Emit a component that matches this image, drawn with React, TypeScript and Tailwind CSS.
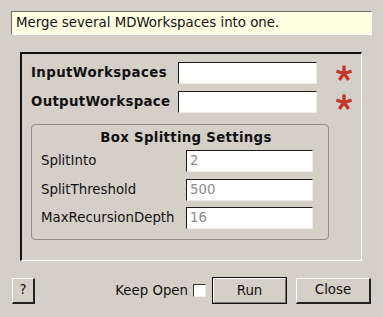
const font = { fontFamily: '"DejaVu Sans", sans-serif' }

const Star = () => (
    <svg width="16" height="16" viewBox="0 0 16 16" className="shrink-0">
        <g stroke="#c0392b" strokeWidth="3.4" strokeLinecap="butt">
            <line x1="8" y1="8.5" x2="8" y2="0.5" />
            <line x1="8" y1="8.5" x2="15.6" y2="6" />
            <line x1="8" y1="8.5" x2="12.7" y2="15" />
            <line x1="8" y1="8.5" x2="3.3" y2="15" />
            <line x1="8" y1="8.5" x2="0.4" y2="6" />
        </g>
    </svg>
)

const Field = ({ value, w }: { value?: string; w: string }) => (
    <div className={`${w} h-[22px] bg-white border border-t-[#1a1a1a] border-l-[#1a1a1a] border-r-[#ecebe8] border-b-[#ecebe8] flex items-center px-[3px] text-[13.33px] text-[#8c8c8c]`}>
        {value}
    </div>
)

const App = () => {
    return (
        <div style={font} className="w-[383px] h-[317px] bg-[#d4d0c8] text-[13.33px] text-[#111] flex flex-col overflow-hidden">
            <div className="mt-[11px] ml-[11px] w-[361px] h-[24px] bg-[#ffffe1] border border-t-[#6e6e6e] border-l-[#6e6e6e] border-r-white border-b-white flex items-center pl-[4px] leading-none">
                Merge several MDWorkspaces into one.
            </div>

            <div className="mt-[17px] ml-[20px] w-[342px] h-[209px] border-t-2 border-l-2 border-t-[#111] border-l-[#111] border-r border-b border-r-white border-b-white flex flex-col pl-[9px] pt-[8px]">
                <div className="flex items-center h-[22px]">
                    <span className="w-[147px] font-bold tracking-[0.4px]">InputWorkspaces</span>
                    <Field w="w-[139px]" />
                    <div className="ml-[19px]"><Star /></div>
                </div>
                <div className="flex items-center h-[22px] mt-[7px]">
                    <span className="w-[147px] font-bold tracking-[0.3px] whitespace-nowrap">OutputWorkspace</span>
                    <Field w="w-[139px]" />
                    <div className="ml-[19px]"><Star /></div>
                </div>

                <div className="mt-[11px] w-[298px] h-[116px] border border-[#8f8c86] rounded-[4px] flex flex-col pl-[9px]">
                    <div className="font-bold text-center pl-[3px] mt-[5px] leading-[15px] tracking-[0.3px]">Box Splitting Settings</div>
                    <div className="flex flex-col gap-[6.5px] mt-[5px]">
                        <div className="flex items-center">
                            <span className="w-[145px]">SplitInto</span>
                            <Field w="w-[127px]" value="2" />
                        </div>
                        <div className="flex items-center">
                            <span className="w-[145px]">SplitThreshold</span>
                            <Field w="w-[127px]" value="500" />
                        </div>
                        <div className="flex items-center">
                            <span className="w-[145px]">MaxRecursionDepth</span>
                            <Field w="w-[127px]" value="16" />
                        </div>
                    </div>
                </div>
            </div>

            <div className="mt-[16px] flex items-center h-[27px]">
                <button className="ml-[12px] w-[23px] h-[26px] border border-t-white border-l-white border-r-2 border-b-2 border-r-[#222] border-b-[#222] bg-[#d4d0c8] text-[13.33px]">
                    ?
                </button>
                <span className="ml-auto">Keep Open</span>
                <div className="ml-[5px] w-[13px] h-[13px] bg-white border border-t-[#333] border-l-[#333] border-r-[#eee] border-b-[#eee]" />
                <button className="ml-[6px] w-[75px] h-[27px] border border-[#111] bg-[#d4d0c8] text-[13.33px] p-0">
                    <div className="w-full h-full border border-t-white border-l-white border-r-[#777] border-b-[#777] flex items-center justify-center">Run</div>
                </button>
                <button className="ml-[9px] mr-[12px] w-[75px] h-[26px] border border-t-white border-l-white border-r-2 border-b-2 border-r-[#222] border-b-[#222] bg-[#d4d0c8] text-[13.33px]">
                    Close
                </button>
            </div>
        </div>
    )
}

export default App
